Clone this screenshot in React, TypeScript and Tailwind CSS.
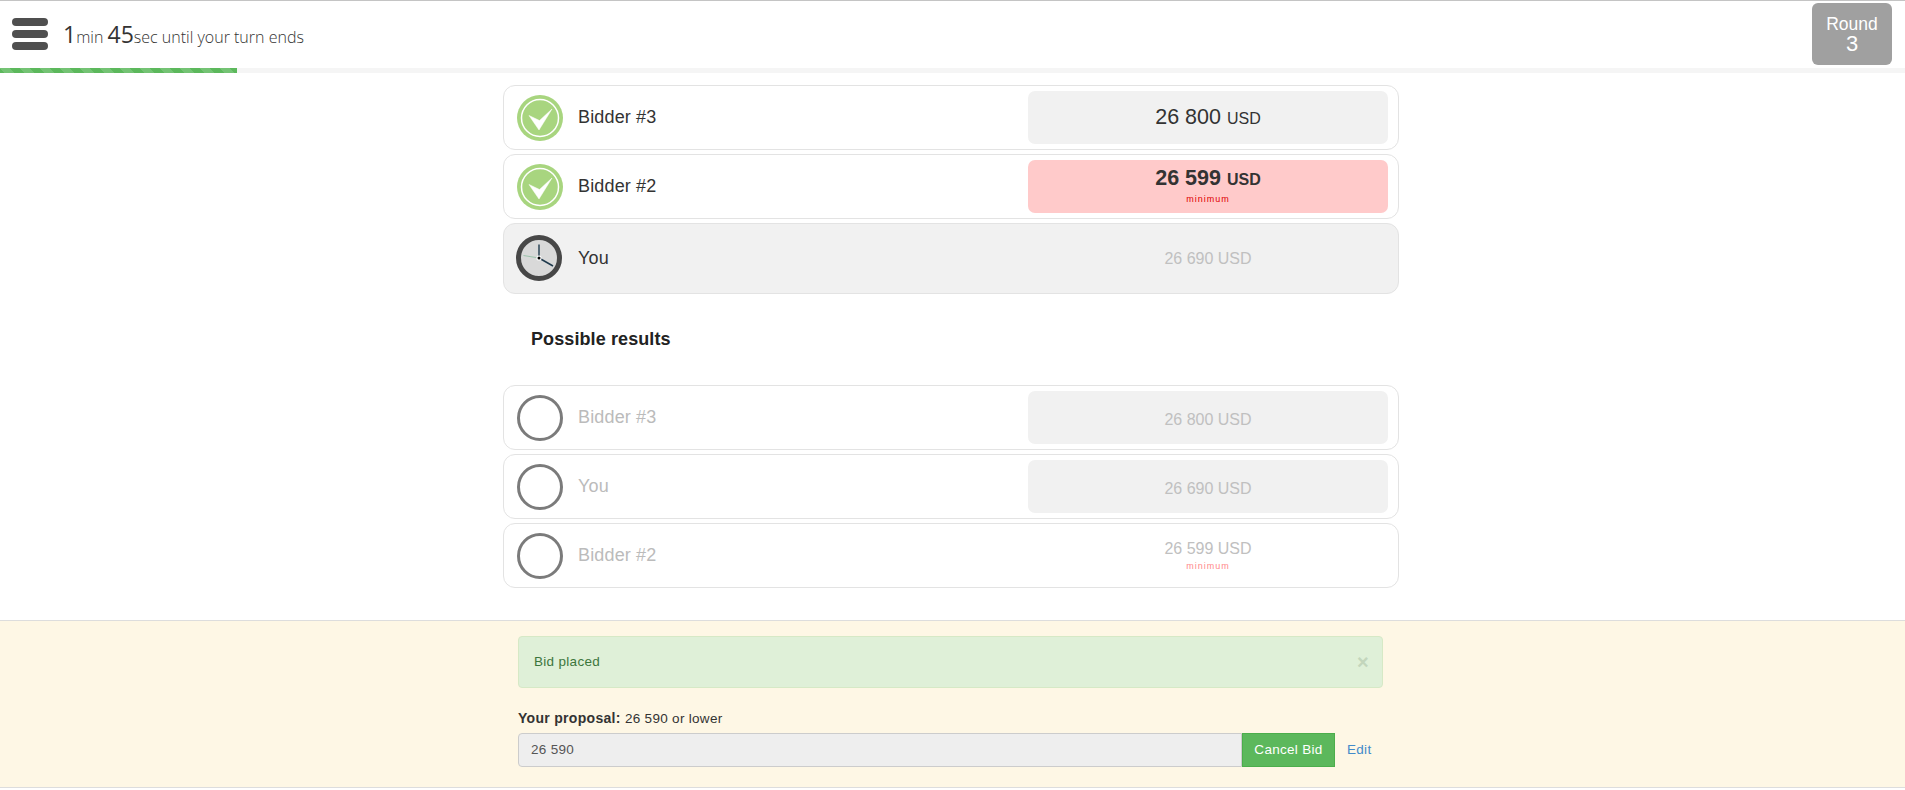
import type { ReactNode } from 'react';

function CheckIcon() {
  return (
    <svg width="46" height="46" viewBox="0 0 46 46" className="shrink-0">
      <circle cx="23" cy="23" r="23" fill="#a8d57f" />
      <circle cx="23" cy="23" r="18.5" fill="#a8d57f" stroke="#fff" strokeWidth="1.5" />
      <path d="M12 20.5 L22.5 25.5 L35 14 L22 35 Z" fill="#fff" stroke="#fff" strokeWidth="0.5" strokeLinejoin="round" />
    </svg>
  );
}

function ClockIcon() {
  return (
    <svg width="46" height="46" viewBox="0 0 46 46" className="shrink-0 -ml-[1px] mr-[1px]">
      <circle cx="23" cy="23" r="20.5" fill="#d9d9d9" stroke="#474747" strokeWidth="5" />
      <path d="M23 9.5 V23" stroke="#1f3a4d" strokeWidth="1.4" />
      <path d="M23 23 L37 31" stroke="#1f3a4d" strokeWidth="1.6" />
      <path d="M7.5 20.5 L23 23" stroke="#9cc4ac" strokeWidth="1" />
      <circle cx="23" cy="23" r="2.6" fill="#fff" />
      <circle cx="23" cy="23" r="1.5" fill="#000" />
    </svg>
  );
}

function EmptyIcon() {
  return (
    <svg width="46" height="46" viewBox="0 0 46 46" className="shrink-0">
      <circle cx="23" cy="23" r="21.5" fill="none" stroke="#7b7b7b" strokeWidth="3" />
    </svg>
  );
}

function Row({
  icon,
  name,
  dim,
  active,
  cell,
  children,
}: {
  icon: ReactNode;
  name: string;
  dim?: boolean;
  active?: boolean;
  cell?: string;
  children: ReactNode;
}) {
  return (
    <div
      className={`flex items-center border border-[#e3e3e3] rounded-[12px] pl-[13px] pr-[10px] ${
        active ? 'h-[71px] bg-[#f1f1f1] pb-[1px]' : 'h-[65px] bg-white'
      }`}
    >
      {icon}
      <div
        className={`ml-[15px] flex-1 text-[18px] tracking-[0.15px] ${
          dim ? 'text-[#bbbbbb]' : 'text-[#333333]'
        }`}
      >
        {name}
      </div>
      <div className={`w-[360px] h-[53px] rounded-[7px] flex flex-col items-center justify-center ${cell ?? ''}`}>
        {children}
      </div>
    </div>
  );
}

function Faded({ value, minimum, low }: { value: string; minimum?: boolean; low?: boolean }) {
  return (
    <>
      <div className={`text-[16px] leading-[20px] text-[#c0c0c0] ${low ? 'mt-[4px]' : minimum ? '' : 'mt-[2px]'}`}>
        {value} USD
      </div>
      {minimum && (
        <div className="text-[9px] leading-[12px] mt-[1px] tracking-[1px] text-[#ff8a8a]">minimum</div>
      )}
    </>
  );
}

export default function App() {
  return (
    <div className="h-[790px] bg-white flex flex-col overflow-hidden font-['Liberation_Sans',sans-serif]">
      {/* Top bar */}
      <div className="h-[68px] shrink-0 border-t border-t-[#c4c4c4] flex items-center pl-[12px] pr-[13px] bg-white">
        <div className="w-[36px] flex flex-col gap-[4px] -mt-[2px]">
          <div className="h-[8px] rounded-[4px] bg-[#4f4f4f]" />
          <div className="h-[8px] rounded-[4px] bg-[#4f4f4f]" />
          <div className="h-[8px] rounded-[4px] bg-[#4f4f4f]" />
        </div>
        <div className="ml-[15px] text-[16px] font-light text-[#333333] -mt-[1px] font-['Open_Sans',sans-serif]">
          <span className="text-[23px] font-normal">1</span>min <span className="text-[23px] font-normal">45</span>sec until your turn ends
        </div>
        <div className="ml-auto -mt-[2px] w-[80px] h-[62px] rounded-[6px] bg-[#a0a0a0] text-white text-center flex flex-col justify-center pt-[1px]">
          <div className="text-[17.5px] leading-[20px]">Round</div>
          <div className="text-[22px] leading-[20px]">3</div>
        </div>
      </div>

      {/* Progress */}
      <div className="h-[5px] shrink-0 bg-[#f5f5f5]">
        <div className="h-full w-[237px] bg-[#5cb85c] bg-[linear-gradient(45deg,rgba(255,255,255,0.15)_25%,transparent_25%,transparent_50%,rgba(255,255,255,0.15)_50%,rgba(255,255,255,0.15)_75%,transparent_75%,transparent)] bg-size-[20px_20px]" />
      </div>

      {/* Bids */}
      <div className="flex-1 w-[896px] ml-[503px] pt-[12px] flex flex-col">
        <div className="flex flex-col gap-[4px]">
          <Row icon={<CheckIcon />} name="Bidder #3" cell="bg-[#f1f1f1]">
            <div className="text-[#333333] text-[21.5px] leading-[26px] mt-[1px]">
              26 800 <span className="text-[16px]">USD</span>
            </div>
          </Row>
          <Row icon={<CheckIcon />} name="Bidder #2" cell="bg-[#ffcaca]">
            <div className="text-[#333333] text-[21.5px] leading-[26px] font-bold -mt-[3px]">
              26 599 <span className="text-[16px]">USD</span>
            </div>
            <div className="text-[9px] leading-[12px] tracking-[1px] text-[#e00000]">minimum</div>
          </Row>
          <Row icon={<ClockIcon />} name="You" active>
            <Faded value="26 690" />
          </Row>
        </div>

        <div className="ml-[28px] mt-[34px] mb-[35px] h-[22px] text-[18px] leading-[22px] tracking-[0.1px] font-bold text-[#222222]">
          Possible results
        </div>

        <div className="flex flex-col gap-[4px]">
          <Row icon={<EmptyIcon />} name="Bidder #3" dim cell="bg-[#f1f1f1]">
            <Faded value="26 800" low />
          </Row>
          <Row icon={<EmptyIcon />} name="You" dim cell="bg-[#f1f1f1]">
            <Faded value="26 690" low />
          </Row>
          <Row icon={<EmptyIcon />} name="Bidder #2" dim>
            <Faded value="26 599" minimum />
          </Row>
        </div>
      </div>

      {/* Proposal */}
      <div className="h-[168px] mb-[2px] shrink-0 border-y border-[#dddddd] bg-[#fef7e5]">
        <div className="w-[865px] ml-[518px] pt-[15px]">
          <div className="h-[52px] rounded-[4px] border border-[#d6e9c6] bg-[#dff0d8] text-[#3c763d] text-[13.5px] tracking-[0.3px] flex items-center justify-between pl-[15px] pr-[13px]">
            <span>Bid placed</span>
            <span className="text-[20px] font-bold leading-none text-[#c3d6bc]">×</span>
          </div>
          <div className="mt-[21px] text-[14px] leading-[18px] tracking-[0.3px] text-[#333333]">
            <b>Your proposal:</b> <span className="text-[13.5px]">26 590 or lower</span>
          </div>
          <div className="mt-[5px] flex items-center h-[34px] tracking-[0.3px] text-[13.5px]">
            <div className="w-[724px] h-full rounded-l-[4px] border border-[#cccccc] bg-[#eeeeee] text-[#555555] flex items-center pl-[12px]">
              26 590
            </div>
            <div className="w-[93px] h-full border border-[#4cae4c] bg-[#5cb85c] text-white flex items-center justify-center">
              Cancel Bid
            </div>
            <a className="ml-[12px] text-[#428bca]">Edit</a>
          </div>
        </div>
      </div>
    </div>
  );
}
